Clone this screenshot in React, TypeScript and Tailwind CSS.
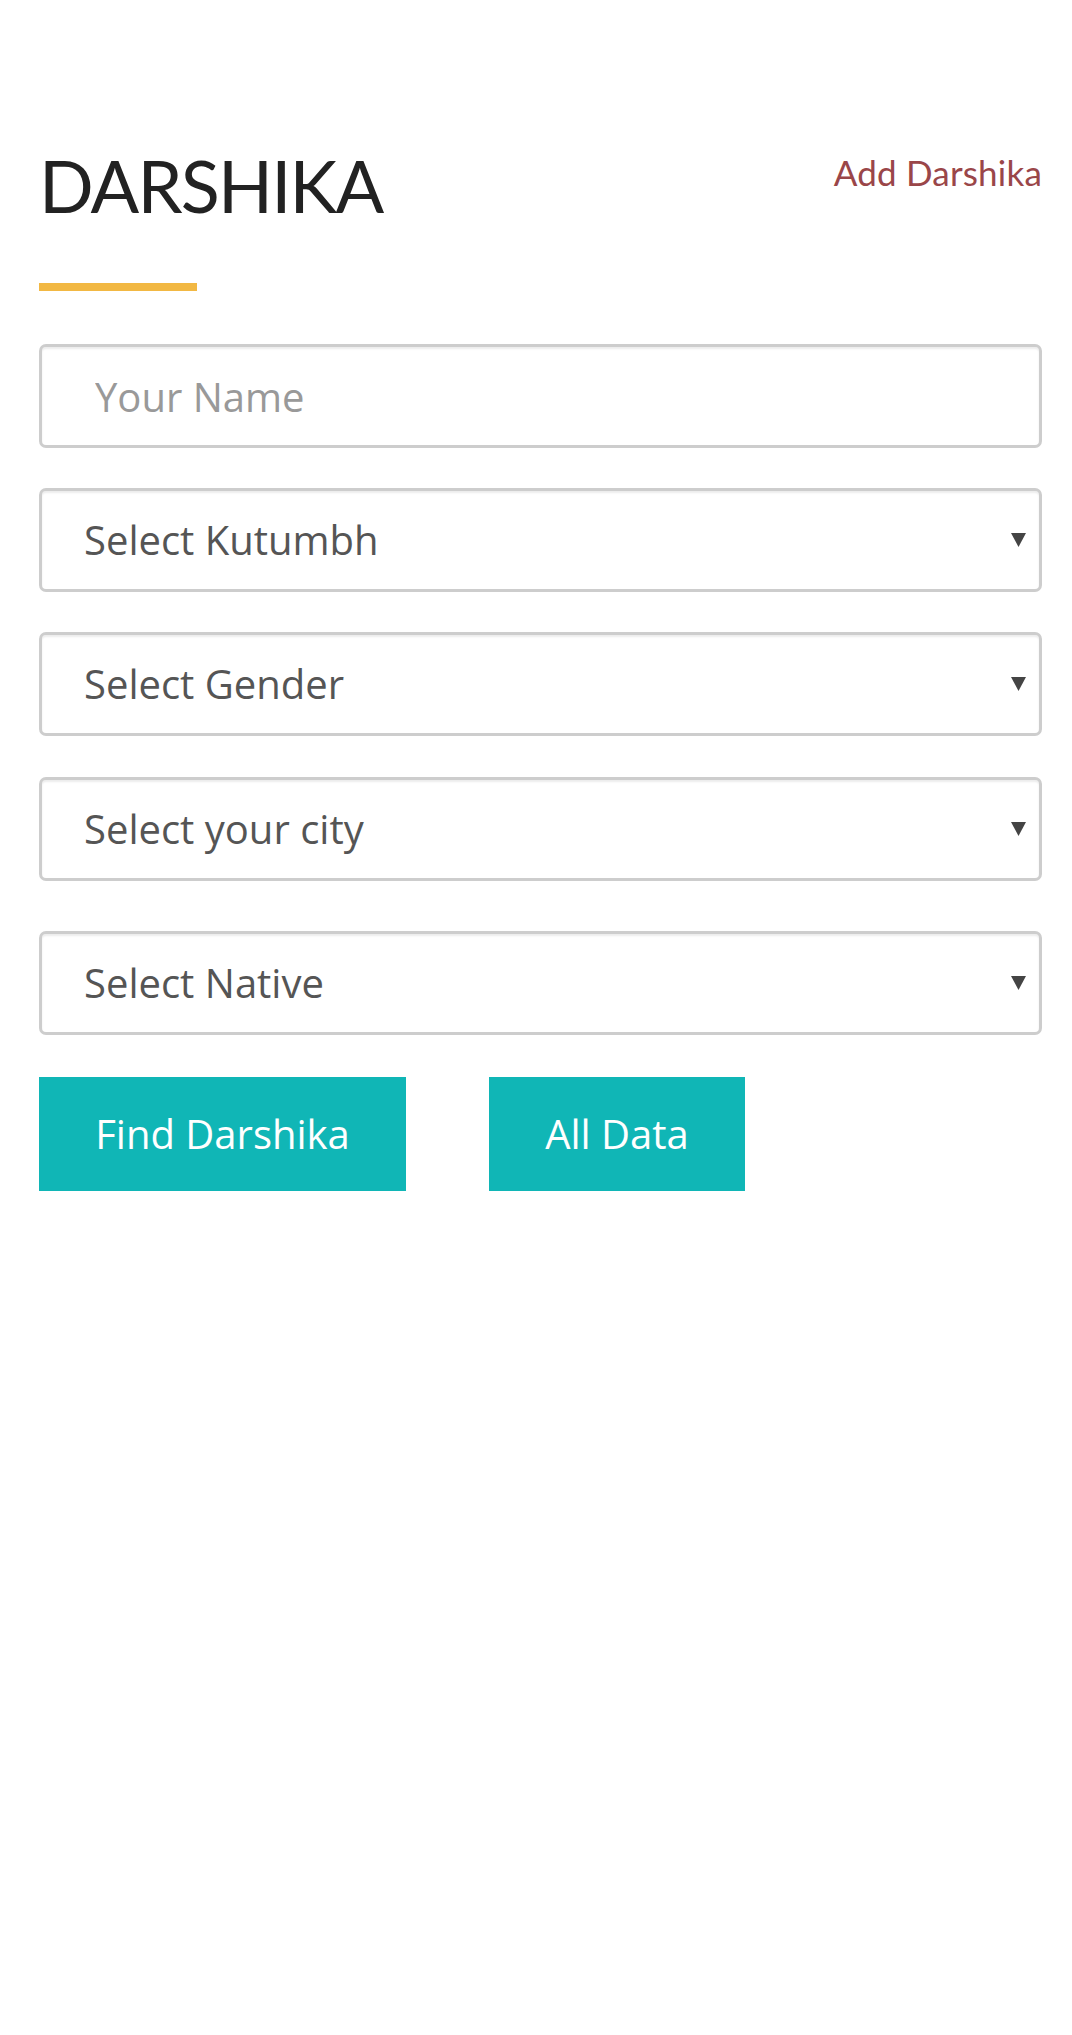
import React from "react";

function Arrow() {
  return (
    <svg width="15" height="14" viewBox="0 0 15 14" className="absolute right-[13px] top-1/2 -translate-y-1/2">
      <polygon points="0,0 15,0 7.5,14" fill="#444444" />
    </svg>
  );
}

function SelectBox({ label, className = "" }: { label: string; className?: string }) {
  return (
    <div
      className={`relative flex h-[104px] w-full items-center rounded-[7px] border-[3px] border-[#cdcdcd] bg-white pl-[42px] shadow-[inset_0_2px_2px_rgba(0,0,0,0.08)] ${className}`}
    >
      <span className="text-[40px] leading-[54px] text-[#555555]" style={{ fontFamily: '"Open Sans", sans-serif' }}>
        {label}
      </span>
      <Arrow />
    </div>
  );
}

export default function App() {
  return (
    <div className="min-h-[2035px] w-full bg-white pl-[39px] pr-[30px] pt-[149px]">
      <div className="flex items-start justify-between">
        <h1
          className="text-[72px] font-normal leading-[72px] tracking-[-1.8px] text-[#222222]"
          style={{ fontFamily: 'Lato, "Open Sans", sans-serif' }}
        >
          DARSHIKA
        </h1>
        <a
          className="mt-[6px] text-[35px] leading-[35px] tracking-[0.2px] text-[#9a4649]"
          style={{ fontFamily: 'Lato, "Open Sans", sans-serif' }}
          href="#"
        >
          Add Darshika
        </a>
      </div>
      <div className="mt-[62px] h-[8px] w-[158px] bg-[#f2b843]" />
      <form className="mt-[53px] flex flex-col" style={{ fontFamily: '"Open Sans", sans-serif' }}>
        <input
          type="text"
          placeholder="Your Name"
          className="h-[104px] w-full rounded-[7px] border-[3px] border-[#cdcdcd] bg-white pl-[53px] text-[40px] text-[#555555] shadow-[inset_0_2px_2px_rgba(0,0,0,0.08)] outline-none placeholder:text-[#999999]"
        />
        <SelectBox label="Select Kutumbh" className="mt-[40px]" />
        <SelectBox label="Select Gender" className="mt-[40px]" />
        <SelectBox label="Select your city" className="mt-[41px]" />
        <SelectBox label="Select Native" className="mt-[50px]" />
        <div className="mt-[42px] flex items-start gap-[83px]">
          <button
            type="button"
            className="flex h-[114px] w-[367px] items-center justify-center bg-[#10b6b6] text-[40px] text-white"
          >
            Find Darshika
          </button>
          <button
            type="button"
            className="flex h-[114px] w-[256px] items-center justify-center bg-[#10b6b6] text-[40px] text-white"
          >
            All Data
          </button>
        </div>
      </form>
    </div>
  );
}
